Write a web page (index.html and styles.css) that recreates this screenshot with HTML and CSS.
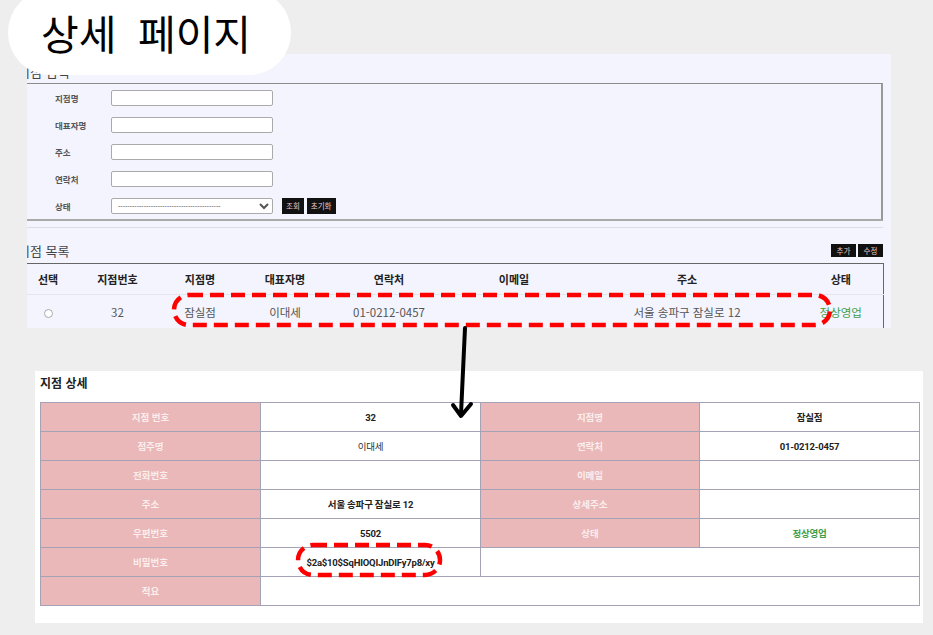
FILE: index.html
```html
<!doctype html>
<html lang="ko">
<head>
    <meta charset="UTF-8">
    <meta name="viewport" content="width=device-width, initial-scale=1.0">
    <title>상세 페이지</title>
    <link rel="stylesheet" href="styles.css">
</head>
<body>
    <div class="page-title">상세 페이지</div>

    <!-- 지점 목록 화면 캡처 -->
    <div class="shot list-shot">
        <div class="shot-inner">
            <div class="section-title search-title">지점 검색</div>
            <div class="search-box">
                <div class="form-row"><label>지점명</label><input type="text"></div>
                <div class="form-row"><label>대표자명</label><input type="text"></div>
                <div class="form-row"><label>주소</label><input type="text"></div>
                <div class="form-row"><label>연락처</label><input type="text"></div>
                <div class="form-row">
                    <label>상태</label>
                    <select>
                        <option>--------------------------------------------</option>
                    </select>
                    <button class="btn-dark">조회</button>
                    <button class="btn-dark">초기화</button>
                </div>
            </div>
            <div class="divider"></div>

            <div class="list-head">
                <div class="section-title">지점 목록</div>
                <div class="list-buttons">
                    <button class="btn-dark">추가</button>
                    <button class="btn-dark">수정</button>
                </div>
            </div>

            <table class="branch-table">
                <colgroup>
                    <col style="width: 64px">
                    <col style="width: 75px">
                    <col style="width: 90px">
                    <col style="width: 80px">
                    <col style="width: 128px">
                    <col style="width: 122px">
                    <col style="width: 224px">
                    <col style="width: 84px">
                </colgroup>
                <thead>
                    <tr>
                        <th>선택</th>
                        <th>지점번호</th>
                        <th>지점명</th>
                        <th>대표자명</th>
                        <th>연락처</th>
                        <th>이메일</th>
                        <th>주소</th>
                        <th>상태</th>
                    </tr>
                </thead>
                <tbody>
                    <tr>
                        <td><span class="radio"></span></td>
                        <td>32</td>
                        <td>잠실점</td>
                        <td>이대세</td>
                        <td>01-0212-0457</td>
                        <td></td>
                        <td>서울 송파구 잠실로 12</td>
                        <td class="status">정상영업</td>
                    </tr>
                </tbody>
            </table>
        </div>
    </div>

    <!-- 지점 상세 화면 캡처 -->
    <div class="shot detail-shot">
        <div class="detail-title">지점 상세</div>
        <table class="detail-table">
            <colgroup>
                <col style="width: 220px">
                <col style="width: 220px">
                <col style="width: 219px">
                <col style="width: 220px">
            </colgroup>
            <tr>
                <th>지점 번호</th><td>32</td>
                <th>지점명</th><td>잠실점</td>
            </tr>
            <tr>
                <th>점주명</th><td class="light">이대세</td>
                <th>연락처</th><td>01-0212-0457</td>
            </tr>
            <tr>
                <th>전화번호</th><td></td>
                <th>이메일</th><td></td>
            </tr>
            <tr>
                <th>주소</th><td>서울 송파구 잠실로 12</td>
                <th>상세주소</th><td></td>
            </tr>
            <tr>
                <th>우편번호</th><td>5502</td>
                <th>상태</th><td class="status">정상영업</td>
            </tr>
            <tr>
                <th>비밀번호</th><td>$2a$10$SqHIOQIJnDIFy7p8/xy</td>
                <td colspan="2"></td>
            </tr>
            <tr>
                <th>적요</th><td colspan="3"></td>
            </tr>
        </table>
    </div>

    <!-- 표시선 (점선 강조, 화살표) -->
    <svg class="marks" width="933" height="635" viewBox="0 0 933 635">
        <rect x="174" y="295" width="656" height="30" rx="15" fill="none" stroke="#ff0000" stroke-width="4.5" stroke-dasharray="14 7"/>
        <rect x="298" y="545" width="142" height="30" rx="15" fill="none" stroke="#ff0000" stroke-width="4.5" stroke-dasharray="14 7"/>
        <path d="M465 328 L461 414" fill="none" stroke="#000" stroke-width="4" stroke-linecap="round"/>
        <path d="M453 405 L461 416 L471 404" fill="none" stroke="#000" stroke-width="4" stroke-linecap="round" stroke-linejoin="round"/>
    </svg>
</body>
</html>
```

FILE: styles.css
```css
body {
    margin: 0;
    padding: 0;
    height: 635px;
    overflow: hidden;
    position: relative;
    background: #eeeeee;
    font-family: "Noto Sans CJK KR", "Noto Sans", sans-serif;
    color: #333;
}

/* 상단 제목 */
.page-title {
    position: absolute;
    top: -10px;
    left: 8px;
    width: 283px;
    height: 85px;
    box-sizing: border-box;
    padding-left: 33px;
    border-radius: 42px;
    background: #fff;
    font-size: 41px;
    line-height: 85px;
    word-spacing: 10px;
    color: #000;
    z-index: 2;
}

.shot {
    overflow: hidden;
    box-sizing: border-box;
}

/* 목록 화면 */
.list-shot {
    margin: 54px 0 0 27px;
    width: 864px;
    height: 274px;
    background: #f3f4fd;
}

.shot-inner {
    margin-left: -11px;
    width: 867px;
}

.section-title {
    padding-left: 2px;
    font-size: 13px;
    line-height: 20px;
    color: #444;
}

.search-title {
    height: 29px;
    box-sizing: border-box;
    padding-top: 8px;
}

.search-box {
    border-top: 1px solid #8c8c8c;
    border-right: 2px solid #999;
    border-bottom: 2px solid #aaa;
}

.form-row {
    display: flex;
    align-items: center;
    height: 27px;
    padding-left: 39px;
}

.form-row label {
    width: 56px;
    font-size: 8.5px;
    font-weight: bold;
    color: #555;
}

.form-row input,
.form-row select {
    width: 162px;
    height: 16px;
    box-sizing: border-box;
    margin: 0;
    border: 1px solid #aaa;
    border-radius: 2px;
    background: #fff;
}

.form-row select {
    font-size: 7px;
    color: #555;
    padding: 0 2px;
    margin-right: 9px;
}

.btn-dark {
    height: 16px;
    margin: 0 3px 0 0;
    padding: 0 4px;
    border: none;
    background: #111;
    color: #e9c9c9;
    font-family: "Noto Sans CJK KR", sans-serif;
    font-size: 7.5px;
    cursor: pointer;
}

.divider {
    margin-top: 6px;
    height: 1px;
    background: #dcdde8;
}

.list-head {
    display: flex;
    justify-content: space-between;
    align-items: center;
    height: 35px;
    box-sizing: border-box;
    padding-top: 10px;
}

.list-buttons {
    display: flex;
    gap: 2px;
}

.list-buttons .btn-dark {
    height: 13px;
    width: 25px;
    margin: 0;
    padding: 0;
}

.branch-table {
    width: 867px;
    table-layout: fixed;
    border-collapse: collapse;
    border-top: 1px solid #666;
    border-right: 1px solid #666;
}

.branch-table th {
    height: 30px;
    font-size: 11px;
    font-weight: bold;
    color: #222;
    border-bottom: 1px solid #e4e5ef;
    padding: 0;
}

.branch-table td {
    height: 34px;
    font-size: 11.5px;
    color: #555;
    text-align: center;
    padding: 0;
}

.radio {
    display: inline-block;
    width: 7px;
    height: 7px;
    border: 1px solid #aaa;
    border-radius: 50%;
    background: #fff;
    vertical-align: middle;
}

.status {
    color: #3f9d48 !important;
}

/* 상세 화면 */
.detail-shot {
    margin: 43px 0 0 35px;
    width: 888px;
    height: 252px;
    padding-left: 5px;
    background: #fff;
}

.detail-title {
    height: 31px;
    box-sizing: border-box;
    padding-top: 3px;
    font-size: 12px;
    line-height: 18px;
    font-weight: bold;
    color: #222;
}

.detail-table {
    width: 879px;
    table-layout: fixed;
    border-collapse: collapse;
}

.detail-table th,
.detail-table td {
    height: 28px;
    padding: 0;
    border: 1px solid #a3a3b5;
    text-align: center;
}

.detail-table th {
    background: #eab8b8;
    color: #fbeeee;
    font-size: 9.5px;
    font-weight: bold;
}

.detail-table td {
    background: #fff;
    color: #222;
    font-family: Roboto, "Noto Sans CJK KR", sans-serif;
    font-size: 9.5px;
    letter-spacing: -0.2px;
    font-weight: bold;
}

.detail-table td.light {
    font-weight: normal;
    color: #333;
}

/* 점선 강조, 화살표 */
.marks {
    position: absolute;
    top: 0;
    left: 0;
    pointer-events: none;
    z-index: 3;
}
```
